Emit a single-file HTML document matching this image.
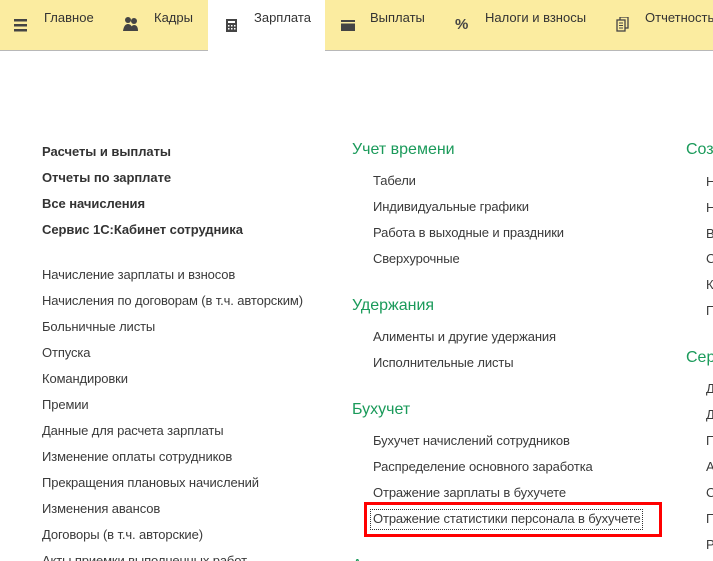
<!DOCTYPE html>
<html><head><meta charset="utf-8"><style>
html,body{margin:0;padding:0}
body{width:713px;height:561px;overflow:hidden;background:#fff;font-family:"Liberation Sans",Arial,sans-serif}
#w{position:relative;width:713px;height:561px;overflow:hidden}
.bar{position:absolute;left:0;top:0;width:713px;height:50px;background:#fbeca0;border-bottom:1px solid #b8b8b8}
.act{position:absolute;left:208px;top:0;width:117px;height:51px;background:#fff}
.t{position:absolute;font-size:13px;color:#3a3a3a;line-height:16px;white-space:nowrap;letter-spacing:-0.12px}
.tab{position:absolute;top:10px;font-size:13px;color:#333;white-space:nowrap}
.b{font-weight:bold;color:#333;letter-spacing:-0.05px}
.h{position:absolute;font-size:16px;color:#1a9a5a;line-height:20px;white-space:nowrap}
.ic{position:absolute}
</style></head><body><div id="w">
<div class="bar"></div><div class="act"></div>
<svg class="ic" style="left:14px;top:19px" width="14" height="14"><rect y="0" width="13" height="2.5" fill="#444"/><rect y="5" width="13" height="2.5" fill="#444"/><rect y="10" width="13" height="2.5" fill="#444"/></svg>
<div class="tab" style="left:44px">Главное</div>
<svg class="ic" style="left:123px;top:16px" width="16" height="16"><circle cx="5" cy="4" r="3" fill="#444"/><circle cx="11" cy="5" r="3" fill="#444"/><path d="M0 15 Q1 8 5 8 Q9 8 10 15Z M7 15 Q8 9 11 9 Q15 9 15 15Z" fill="#444"/></svg>
<div class="tab" style="left:154px">Кадры</div>
<svg class="ic" style="left:226px;top:19px" width="12" height="14"><rect x="0" y="0" width="11" height="13" fill="#444"/><rect x="2" y="2" width="7" height="2" fill="#fff"/><g fill="#fff"><rect x="2" y="6" width="1.5" height="1.5"/><rect x="5" y="6" width="1.5" height="1.5"/><rect x="8" y="6" width="1.5" height="1.5"/><rect x="2" y="9" width="1.5" height="1.5"/><rect x="5" y="9" width="1.5" height="1.5"/><rect x="8" y="9" width="1.5" height="1.5"/></g></svg>
<div class="tab" style="left:254px">Зарплата</div>
<svg class="ic" style="left:341px;top:20px" width="14" height="12"><rect width="14" height="11" fill="#444"/><rect x="0" y="2" width="14" height="1.5" fill="#fbeca0"/></svg>
<div class="tab" style="left:370px">Выплаты</div>
<div class="tab" style="left:455px;top:16px;font-weight:bold;font-size:15px;color:#444">%</div>
<div class="tab" style="left:485px">Налоги и взносы</div>
<svg class="ic" style="left:616px;top:17px" width="13" height="16"><rect x="4" y="0" width="8" height="11" fill="none" stroke="#444" stroke-width="1.3"/><rect x="1" y="3" width="8" height="11" fill="#fbeca0" stroke="#444" stroke-width="1.3"/><path d="M3 6h4M3 8.5h4M3 11h4" stroke="#444"/></svg>
<div class="tab" style="left:645px">Отчетность</div>

<div class="t b" style="left:42px;top:144px">Расчеты и выплаты</div>
<div class="t b" style="left:42px;top:170px">Отчеты по зарплате</div>
<div class="t b" style="left:42px;top:196px">Все начисления</div>
<div class="t b" style="left:42px;top:222px">Сервис 1С:Кабинет сотрудника</div>
<div class="t" style="left:42px;top:267px">Начисление зарплаты и взносов</div>
<div class="t" style="left:42px;top:293px">Начисления по договорам (в т.ч. авторским)</div>
<div class="t" style="left:42px;top:319px">Больничные листы</div>
<div class="t" style="left:42px;top:345px">Отпуска</div>
<div class="t" style="left:42px;top:371px">Командировки</div>
<div class="t" style="left:42px;top:397px">Премии</div>
<div class="t" style="left:42px;top:423px">Данные для расчета зарплаты</div>
<div class="t" style="left:42px;top:449px">Изменение оплаты сотрудников</div>
<div class="t" style="left:42px;top:475px">Прекращения плановых начислений</div>
<div class="t" style="left:42px;top:501px">Изменения авансов</div>
<div class="t" style="left:42px;top:527px">Договоры (в т.ч. авторские)</div>
<div class="t" style="left:42px;top:553px">Акты приемки выполненных работ</div>

<div class="h" style="left:352px;top:140px">Учет времени</div>
<div class="t" style="left:373px;top:173px">Табели</div>
<div class="t" style="left:373px;top:199px">Индивидуальные графики</div>
<div class="t" style="left:373px;top:225px">Работа в выходные и праздники</div>
<div class="t" style="left:373px;top:251px">Сверхурочные</div>
<div class="h" style="left:352px;top:296px">Удержания</div>
<div class="t" style="left:373px;top:329px">Алименты и другие удержания</div>
<div class="t" style="left:373px;top:355px">Исполнительные листы</div>
<div class="h" style="left:352px;top:400px">Бухучет</div>
<div class="t" style="left:373px;top:433px">Бухучет начислений сотрудников</div>
<div class="t" style="left:373px;top:459px">Распределение основного заработка</div>
<div class="t" style="left:373px;top:485px">Отражение зарплаты в бухучете</div>
<div style="position:absolute;left:370px;top:509px;width:273px;height:21px;border:1px dotted #333;box-sizing:border-box"></div>
<div class="t" style="left:373px;top:511px">Отражение статистики персонала в бухучете</div>
<div style="position:absolute;left:364px;top:502px;width:298px;height:35px;border:3px solid #f00;box-sizing:border-box"></div>
<div class="h" style="left:352px;top:556px">А</div>

<div class="h" style="left:686px;top:140px">Создание</div>
<div class="t" style="left:706px;top:174px">Н</div>
<div class="t" style="left:706px;top:200px">Н</div>
<div class="t" style="left:706px;top:226px">В</div>
<div class="t" style="left:706px;top:251px">С</div>
<div class="t" style="left:706px;top:277px">К</div>
<div class="t" style="left:706px;top:303px">П</div>
<div class="h" style="left:686px;top:348px">Сервис</div>
<div class="t" style="left:706px;top:381px">Д</div>
<div class="t" style="left:706px;top:407px">Д</div>
<div class="t" style="left:706px;top:433px">П</div>
<div class="t" style="left:706px;top:459px">А</div>
<div class="t" style="left:706px;top:485px">С</div>
<div class="t" style="left:706px;top:511px">П</div>
<div class="t" style="left:706px;top:537px">Р</div>
</div></body></html>
